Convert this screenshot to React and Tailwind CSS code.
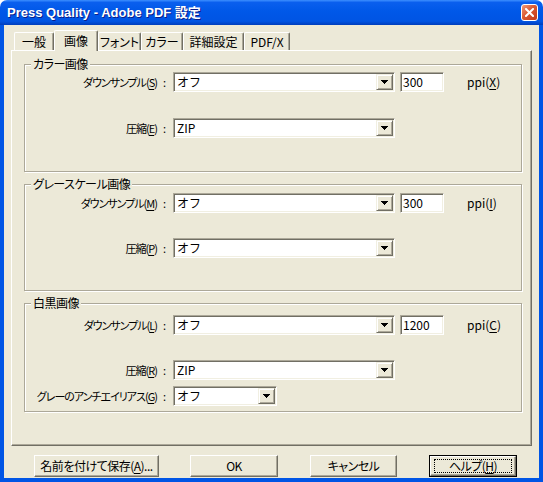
import React from "react";

const font = { fontFamily: '"Noto Sans CJK JP", "Noto Sans", sans-serif' };

const Arrow = () => (
  <svg width="7" height="4" viewBox="0 0 7 4" shapeRendering="crispEdges">
    <rect x="0" y="0" width="7" height="1" fill="#000" />
    <rect x="1" y="1" width="5" height="1" fill="#000" />
    <rect x="2" y="2" width="3" height="1" fill="#000" />
    <rect x="3" y="3" width="1" height="1" fill="#000" />
  </svg>
);

const Combo = ({ value, width }) => (
  <div className={`flex h-[20px] ${width} p-px bg-white border border-[#ACA899] border-b-white border-r-white shadow-[inset_1px_1px_#716F64,inset_-1px_-1px_#F1EFE2]`}>
    <div className="flex-1 pl-[2px] text-[12px] leading-[16px] text-black">{value}</div>
    <div className="flex w-[17px] h-full items-center justify-center bg-[#ECE9D8] border border-[#F1EFE2] border-b-[#716F64] border-r-[#716F64] shadow-[inset_1px_1px_white,inset_-1px_-1px_#ACA899]">
      <Arrow />
    </div>
  </div>
);

const Field = ({ value }) => (
  <div className="ml-[5px] flex h-[20px] w-[44px] p-px bg-white border border-[#ACA899] border-b-white border-r-white shadow-[inset_1px_1px_#716F64,inset_-1px_-1px_#F1EFE2]">
    <div className="pl-[1px] text-[12px] leading-[16px] text-black">{value}</div>
  </div>
);

const Label = ({ text, k }) => (
  <div className="w-[148px] pr-[7px] flex justify-end text-[11px] leading-[20px] text-black whitespace-nowrap [font-feature-settings:'palt']">
    <span className="tracking-[-1px]">
      {text}(<span className="underline underline-offset-2">{k}</span>)
    </span>
    <span className="ml-[6px]">:</span>
  </div>
);

const Group = ({ title, className, children }) => (
  <div className={`relative ml-[12px] w-[498px] border border-[#ACA899] shadow-[inset_1px_1px_white,1px_1px_white] ${className}`}>
    <span className="absolute -top-[8px] left-[6px] bg-[#ECE9D8] px-[2px] text-[12px] leading-[14px] text-black whitespace-nowrap tracking-[-0.5px] [font-feature-settings:'palt']">
      {title}
    </span>
    {children}
  </div>
);

const Ppi = ({ k }) => (
  <div className="ml-[23px] text-[12px] leading-[20px] text-black">
    ppi(<span className="underline underline-offset-2">{k}</span>)
  </div>
);

const Tab = ({ label, width, active }) =>
  active ? (
    <div className={`${width} h-[21px] flex justify-center pt-[2px] bg-[#ECE9D8] border-l border-t border-white border-r border-r-[#716F64] rounded-t-[2px] shadow-[inset_-1px_0_#ACA899] text-[12px] leading-[16px] text-black whitespace-nowrap [font-feature-settings:'palt']`}>
      {label}
    </div>
  ) : (
    <div className={`${width} h-[18px] mb-px flex justify-center pt-[1px] bg-[#ECE9D8] border-l border-t border-white border-r border-r-[#716F64] rounded-t-[2px] shadow-[inset_-1px_0_#ACA899] text-[12px] leading-[16px] text-black whitespace-nowrap [font-feature-settings:'palt']`}>
      {label}
    </div>
  );

const Btn = ({ children, width, ml, def }) =>
  def ? (
    <div className={`${width} ${ml} h-[22px] border border-black`}>
      <div className="flex h-full items-center justify-center bg-[#ECE9D8] border border-white border-b-[#716F64] border-r-[#716F64] shadow-[inset_-1px_-1px_#ACA899]">
        <div className="flex h-[14px] w-[78px] items-center justify-center border border-dotted border-black text-[12px] leading-[12px] text-black tracking-[-0.5px] [font-feature-settings:'palt']">
          {children}
        </div>
      </div>
    </div>
  ) : (
    <div className={`${width} ${ml} h-[22px] flex items-center justify-center bg-[#ECE9D8] border border-white border-b-[#716F64] border-r-[#716F64] shadow-[inset_-1px_-1px_#ACA899] text-[12px] leading-[14px] text-black tracking-[-0.5px] [font-feature-settings:'palt']`}>
      {children}
    </div>
  );

export default function App() {
  return (
    <div className="w-[543px] h-[482px] flex flex-col bg-white" style={font}>
      {/* title bar */}
      <div className="h-[25px] flex items-center pl-[7px] pr-[5px] rounded-t-[7px] bg-[linear-gradient(to_bottom,#3D8FFF_0%,#0A5FEE_10%,#0058E8_45%,#0054E3_85%,#003DBB_100%)]">
        <div
          className="flex-1 text-[13px] font-bold text-white [text-shadow:1px_1px_#0A1E8A]"
          style={{ fontFamily: '"Liberation Sans", "Noto Sans CJK JP", sans-serif' }}
        >
          Press Quality - Adobe PDF 設定
        </div>
        <div className="flex w-[17px] h-[17px] items-center justify-center rounded-[3px] border border-white bg-[linear-gradient(135deg,#F09A7A_0%,#DA5A33_45%,#C2391A_100%)]">
          <svg width="9" height="9" viewBox="0 0 9 9">
            <path d="M1 1L8 8M8 1L1 8" stroke="white" strokeWidth="2" strokeLinecap="square" />
          </svg>
        </div>
      </div>

      {/* frame */}
      <div className="flex-1 flex flex-col border-l-4 border-r-4 border-b-4 border-[#0055E5]">
        <div className="flex-1 flex flex-col bg-[#ECE9D8] pt-[5px] px-[7px]">
          {/* tabs */}
          <div className="relative z-10 flex items-end h-[21px] ml-[3px]">
            <Tab label="一般" width="w-[40px]" />
            <Tab label="画像" width="w-[44px]" active />
            <Tab label="フォント" width="w-[43px]" />
            <Tab label="カラー" width="w-[42px]" />
            <Tab label="詳細設定" width="w-[61px]" />
            <Tab label="PDF/X" width="w-[46px]" />
          </div>

          {/* panel */}
          <div className="-mt-px h-[396px] flex flex-col border border-white border-b-[#716F64] border-r-[#716F64] shadow-[inset_-1px_-1px_#ACA899]">
            <Group title="カラー画像" className="mt-[13px] h-[108px] pt-[7px]">
              <div className="flex items-center">
                <Label text="ダウンサンプル" k="S" />
                <Combo value="オフ" width="w-[222px]" />
                <Field value="300" />
                <Ppi k="X" />
              </div>
              <div className="mt-[26px] flex items-center">
                <Label text="圧縮" k="E" />
                <Combo value="ZIP" width="w-[222px]" />
              </div>
            </Group>

            <Group title="グレースケール画像" className="mt-[12px] h-[107px] pt-[8px]">
              <div className="flex items-center">
                <Label text="ダウンサンプル" k="M" />
                <Combo value="オフ" width="w-[222px]" />
                <Field value="300" />
                <Ppi k="I" />
              </div>
              <div className="mt-[25px] flex items-center">
                <Label text="圧縮" k="P" />
                <Combo value="オフ" width="w-[222px]" />
              </div>
            </Group>

            <Group title="白黒画像" className="mt-[12px] h-[109px] pt-[11px]">
              <div className="flex items-center">
                <Label text="ダウンサンプル" k="L" />
                <Combo value="オフ" width="w-[222px]" />
                <Field value="1200" />
                <Ppi k="C" />
              </div>
              <div className="mt-[25px] flex items-center">
                <Label text="圧縮" k="R" />
                <Combo value="ZIP" width="w-[222px]" />
              </div>
              <div className="mt-[6px] flex items-center">
                <Label text="グレーのアンチエイリアス" k="G" />
                <Combo value="オフ" width="w-[104px]" />
              </div>
            </Group>
          </div>

          {/* buttons */}
          <div className="mt-[9px] flex">
            <Btn width="w-[125px]" ml="ml-[23px]">
              名前を付けて保存(<span className="underline underline-offset-2">A</span>)...
            </Btn>
            <Btn width="w-[88px]" ml="ml-[31px]">OK</Btn>
            <Btn width="w-[87px]" ml="ml-[32px]">キャンセル</Btn>
            <Btn width="w-[88px]" ml="ml-[32px]" def>
              ヘルプ(<span className="underline underline-offset-2">H</span>)
            </Btn>
          </div>
        </div>
      </div>
    </div>
  );
}
